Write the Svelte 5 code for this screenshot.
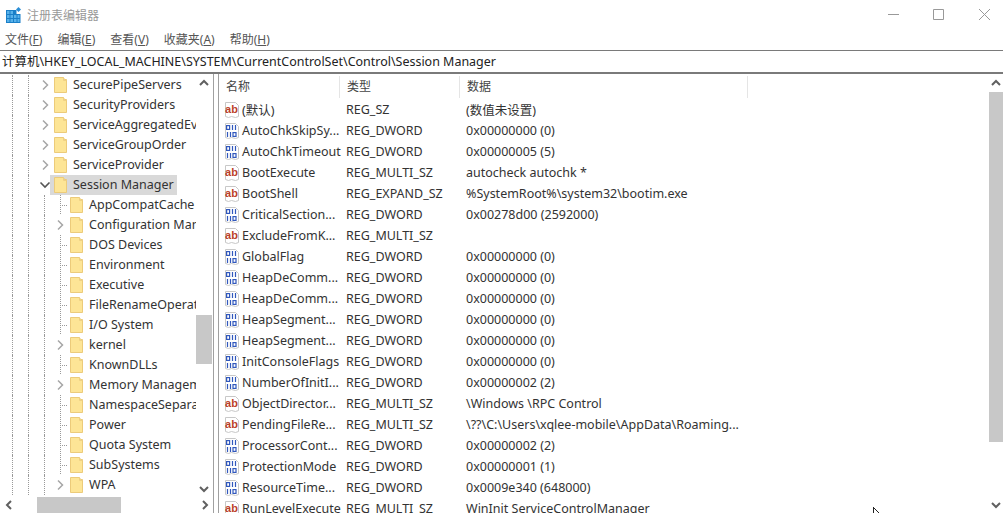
<script>
  const parents = [
    { name: 'SecurePipeServers' },
    { name: 'SecurityProviders' },
    { name: 'ServiceAggregatedEv' },
    { name: 'ServiceGroupOrder' },
    { name: 'ServiceProvider' },
    { name: 'Session Manager', open: true }
  ];
  const children = [
    { name: 'AppCompatCache' },
    { name: 'Configuration Manager', more: true },
    { name: 'DOS Devices' },
    { name: 'Environment' },
    { name: 'Executive' },
    { name: 'FileRenameOperations' },
    { name: 'I/O System' },
    { name: 'kernel', more: true },
    { name: 'KnownDLLs' },
    { name: 'Memory Management', more: true },
    { name: 'NamespaceSeparation' },
    { name: 'Power' },
    { name: 'Quota System' },
    { name: 'SubSystems' },
    { name: 'WPA', more: true }
  ];
  const values = [
    ['s', '(默认)', 'REG_SZ', '(数值未设置)'],
    ['d', 'AutoChkSkipSy...', 'REG_DWORD', '0x00000000 (0)'],
    ['d', 'AutoChkTimeout', 'REG_DWORD', '0x00000005 (5)'],
    ['s', 'BootExecute', 'REG_MULTI_SZ', 'autocheck autochk *'],
    ['s', 'BootShell', 'REG_EXPAND_SZ', '%SystemRoot%\\system32\\bootim.exe'],
    ['d', 'CriticalSection...', 'REG_DWORD', '0x00278d00 (2592000)'],
    ['s', 'ExcludeFromK...', 'REG_MULTI_SZ', ''],
    ['d', 'GlobalFlag', 'REG_DWORD', '0x00000000 (0)'],
    ['d', 'HeapDeComm...', 'REG_DWORD', '0x00000000 (0)'],
    ['d', 'HeapDeComm...', 'REG_DWORD', '0x00000000 (0)'],
    ['d', 'HeapSegment...', 'REG_DWORD', '0x00000000 (0)'],
    ['d', 'HeapSegment...', 'REG_DWORD', '0x00000000 (0)'],
    ['d', 'InitConsoleFlags', 'REG_DWORD', '0x00000000 (0)'],
    ['d', 'NumberOfInitI...', 'REG_DWORD', '0x00000002 (2)'],
    ['s', 'ObjectDirector...', 'REG_MULTI_SZ', '\\Windows \\RPC Control'],
    ['s', 'PendingFileRe...', 'REG_MULTI_SZ', '\\??\\C:\\Users\\xqlee-mobile\\AppData\\Roaming...'],
    ['d', 'ProcessorCont...', 'REG_DWORD', '0x00000002 (2)'],
    ['d', 'ProtectionMode', 'REG_DWORD', '0x00000001 (1)'],
    ['d', 'ResourceTime...', 'REG_DWORD', '0x0009e340 (648000)'],
    ['s', 'RunLevelExecute', 'REG_MULTI_SZ', 'WinInit ServiceControlManager']
  ];
  const menus = [['文件', 'F'], ['编辑', 'E'], ['查看', 'V'], ['收藏夹', 'A'], ['帮助', 'H']];
</script>

{#snippet folder()}
  <svg class="folder" width="13" height="16" viewBox="0 0 13 16">
    <path d="M.5.5h9l1 2h2v13H.5z" fill="#fde596" stroke="#eccb7a"/>
    <path d="M9.500.5v3h3" fill="none" stroke="#efd084"/>
  </svg>
{/snippet}

{#snippet chevron(open)}
  <svg class="chev" width="12" height="12" viewBox="0 0 12 12">
    {#if open}
      <path d="M1.500 3.500 6 8l4.500-4.500" fill="none" stroke="#555" stroke-width="1.600"/>
    {:else}
      <path d="M4 1.500 8.500 6 4 10.500" fill="none" stroke="#a6a6a6" stroke-width="1.500"/>
    {/if}
  </svg>
{/snippet}

{#snippet valueIcon(kind)}
  <svg class="vicon" width="16" height="18" viewBox="0 0 16 18">
    <path d="M1.500 1.500h10l3 3v11l-3 1-4-1-3 1-3-1z" fill="#fff" stroke="#c8c8c8"/>
    {#if kind === 's'}
      <text x="7.500" y="12" class="ab">ab</text>
    {:else}
      <g fill="none" stroke="#3158bd" stroke-width="1.200">
        <rect x="2.600" y="3.600" width="3" height="3.800"/>
        <path d="M8.500 3v5M11.500 3v5M3.500 10v5M6.500 10v5"/>
        <rect x="9" y="10.600" width="3" height="3.800"/>
      </g>
    {/if}
  </svg>
{/snippet}

{#snippet arrow(dir)}
  <svg width="10" height="10" viewBox="0 0 10 10">
    {#if dir === 'up'}<path d="M1 7l4-4 4 4" fill="none" stroke="#606060" stroke-width="2"/>{/if}
    {#if dir === 'down'}<path d="M1 3l4 4 4-4" fill="none" stroke="#606060" stroke-width="2"/>{/if}
    {#if dir === 'left'}<path d="M7 1L3 5l4 4" fill="none" stroke="#606060" stroke-width="2"/>{/if}
    {#if dir === 'right'}<path d="M3 1l4 4-4 4" fill="none" stroke="#606060" stroke-width="2"/>{/if}
  </svg>
{/snippet}

<div class="window">
  <header class="titlebar">
    <svg class="appicon" width="16" height="16" viewBox="0 0 16 16">
      <path d="M0 3h10.500v4H14.500v9H0z" fill="#1a7fc8"/>
      <path d="M1 4h2.500v3H1zM4.500 4H7v3H4.500zM1 8h2.500v3H1zM4.500 8H7v3H4.500zM8 8h2.500v3H8zM1 12h2.500v3H1zM4.500 12H7v3H4.500zM8 12h2.500v3H8zM11.500 8h2v3h-2zM11.500 12h2v3h-2z" fill="#58b2ea"/>
      <path d="M12.500 0l2.500 2.500L12.500 5 10 2.500z" fill="#2c8fd6"/>
    </svg>
    <span class="title">注册表编辑器</span>
    <div class="controls">
      <span class="ctl"><svg width="11" height="11" viewBox="0 0 11 11"><path d="M0 5.500h11" stroke="#999"/></svg></span>
      <span class="ctl"><svg width="11" height="11" viewBox="0 0 11 11"><path d="M.5.5h10v10H.5z" fill="none" stroke="#999"/></svg></span>
      <span class="ctl"><svg width="11" height="11" viewBox="0 0 11 11"><path d="M0 0l11 11M11 0L0 11" stroke="#999"/></svg></span>
    </div>
  </header>

  <nav class="menubar">
    {#each menus as [label, key]}
      <span>{label}(<u>{key}</u>)</span>
    {/each}
  </nav>

  <div class="address">计算机\HKEY_LOCAL_MACHINE\SYSTEM\CurrentControlSet\Control\Session Manager</div>

  <main class="panes">
    <section class="treepane">
      <div class="treeview">
        <div class="treelist">
          {#each parents as p}
            <div class="row">
              <i class="guide"></i><i class="guide"></i>
              <span class="exp">{@render chevron(p.open)}</span>
              <span class="item" class:selected={p.open}>
                {@render folder()}
                <span class="label">{p.name}</span>
              </span>
            </div>
          {/each}
          {#each children as c}
            <div class="row">
              <i class="guide"></i><i class="guide"></i><i class="guide"></i>
              <span class="exp guide2" class:leaf={!c.more}>
                {#if c.more}{@render chevron(false)}{/if}
              </span>
              <span class="item">
                {@render folder()}
                <span class="label">{c.name}</span>
              </span>
            </div>
          {/each}
        </div>
        <div class="vbar">
          <span class="btn">{@render arrow('up')}</span>
          <div class="track tree-track"><b></b></div>
          <span class="btn">{@render arrow('down')}</span>
        </div>
      </div>
      <div class="hbar">
        <span class="btn">{@render arrow('left')}</span>
        <div class="htrack"><b></b></div>
        <span class="btn">{@render arrow('right')}</span>
      </div>
    </section>

    <section class="listpane">
      <div class="listmain">
        <div class="listhead">
          <span class="col1">名称</span>
          <span class="col2">类型</span>
          <span class="col3">数据</span>
        </div>
        {#each values as [kind, name, type, data]}
          <div class="vrow">
            <span class="col1 vname">{@render valueIcon(kind)}<span>{name}</span></span>
            <span class="col2">{type}</span>
            <span class="col3">{data}</span>
          </div>
        {/each}
      </div>
      <div class="vbar list-bar">
        <span class="btn">{@render arrow('up')}</span>
        <div class="track list-track"><b></b></div>
        <span class="btn">{@render arrow('down')}</span>
      </div>
    </section>
  </main>

  <svg class="cursor" width="9" height="6" viewBox="0 0 9 6">
    <path d="M.5 0v6M.5.500 6 6" stroke="#222" fill="none"/>
  </svg>
</div>

<style>
  :global(body) {
    margin: 0;
    background: #fff;
  }
  .window {
    position: relative;
    width: 1003px;
    height: 513px;
    overflow: hidden;
    display: flex;
    flex-direction: column;
    font-family: "Noto Sans", "Noto Sans CJK SC", sans-serif;
    font-size: 12.500px;
    color: #333;
    background: #fff;
  }
  .titlebar {
    height: 30px;
    display: flex;
    align-items: center;
    padding-left: 6px;
    flex: none;
  }
  .title {
    margin-left: 5px;
    font-size: 12px;
    color: #999;
  }
  .controls {
    margin-left: auto;
    margin-right: -4px;
    display: flex;
  }
  .ctl {
    width: 45.500px;
    height: 28px;
    margin-bottom: 2px;
    display: flex;
    align-items: center;
    justify-content: center;
  }
  .menubar {
    height: 20px;
    flex: none;
    box-sizing: border-box;
    padding: 0 0 2px 5px;
    display: flex;
    align-items: center;
    gap: 15px;
    font-size: 12px;
    color: #555;
  }
  .address {
    height: 21px;
    flex: none;
    border-top: 1px solid #7a7a7a;
    border-bottom: 2px solid #7a7a7a;
    padding-left: 2px;
    line-height: 21px;
    font-size: 12.470px;
    white-space: nowrap;
    color: #222;
  }
  .panes {
    flex: 1;
    min-height: 0;
    display: flex;
  }
  .treepane {
    width: 213px;
    flex: none;
    display: flex;
    flex-direction: column;
    border-right: 1px solid #a0a0a0;
  }
  .treeview {
    flex: 1;
    min-height: 0;
    display: flex;
  }
  .treelist {
    width: 196px;
    flex: none;
    overflow: hidden;
    padding-top: 1px;
  }
  .row {
    height: 20px;
    display: flex;
    white-space: nowrap;
    padding-left: 12px;
  }
  .guide {
    width: 15px;
    flex: none;
    border-left: 1px dotted #999;
  }
  .exp {
    width: 11px;
    flex: none;
    display: flex;
    align-items: center;
    justify-content: center;
    margin-left: -5px;
  }
  .chev {
    flex: none;
  }
  .guide2 {
    width: 10px;
    margin-left: 0;
    justify-content: flex-start;
  }
  .guide2 .chev {
    margin-left: -6px;
  }
  .guide2.leaf {
    background:
      repeating-linear-gradient(to bottom, #999 0 1px, transparent 1px 2px) left top / 1px 100% no-repeat,
      repeating-linear-gradient(to right, #999 0 1px, transparent 1px 2px) left center / 8px 1px no-repeat;
  }
  .item {
    display: flex;
    align-items: center;
    height: 20px;
    padding-left: 4px;
    padding-right: 3px;
    flex: none;
  }
  .guide2 + .item {
    padding-left: 0;
  }
  .item.selected {
    background: #d9d9d9;
  }
  .label {
    margin-left: 6px;
    padding-bottom: 2px;
    color: #333;
  }
  .vbar {
    width: 16px;
    flex: none;
    display: flex;
    flex-direction: column;
    align-items: stretch;
  }
  .btn {
    height: 17px;
    flex: none;
    display: flex;
    align-items: center;
    justify-content: center;
  }
  .track {
    flex: 1;
  }
  .track b {
    display: block;
    background: #c8c8c8;
  }
  .tree-track b {
    height: 49px;
    margin-top: 224px;
  }
  .hbar {
    height: 16px;
    flex: none;
    display: flex;
  }
  .hbar .btn {
    width: 17px;
    height: 16px;
  }
  .htrack {
    flex: 1;
    padding-left: 20px;
  }
  .htrack b {
    display: block;
    width: 84px;
    height: 16px;
    background: #c8c8c8;
  }
  .listpane {
    flex: 1;
    min-width: 0;
    display: flex;
    margin-left: 4px;
    border-left: 1px solid #a0a0a0;
    overflow: hidden;
  }
  .listmain {
    flex: 1;
    min-width: 0;
    overflow: hidden;
  }
  .listhead {
    height: 25px;
    display: flex;
    align-items: flex-start;
    font-size: 12px;
    color: #444;
  }
  .listhead span {
    height: 22px;
    margin-top: 2px;
    line-height: 22px;
    border-right: 1px solid #e5e5e5;
    box-sizing: border-box;
    padding-left: 7px;
  }
  .col1 {
    width: 121px;
    flex: none;
  }
  .col2 {
    width: 120px;
    flex: none;
  }
  .col3 {
    width: 288px;
    flex: none;
  }
  .vrow {
    height: 21px;
    display: flex;
    align-items: center;
    white-space: nowrap;
  }
  .vrow .col1 {
    padding-left: 5px;
    box-sizing: border-box;
  }
  .vrow .col2,
  .vrow .col3 {
    padding-left: 6px;
    box-sizing: border-box;
  }
  .vname {
    display: flex;
    align-items: center;
    gap: 2px;
  }
  .vicon {
    flex: none;
  }
  .ab {
    font-family: "Liberation Sans", sans-serif;
    font-size: 11px;
    font-weight: 700;
    fill: #bb3f2a;
    text-anchor: middle;
  }
  .list-bar {
    width: 14px;
  }
  .list-track b {
    height: 350px;
    margin-top: 1px;
  }
  .cursor {
    position: absolute;
    left: 873px;
    top: 507px;
  }
</style>
